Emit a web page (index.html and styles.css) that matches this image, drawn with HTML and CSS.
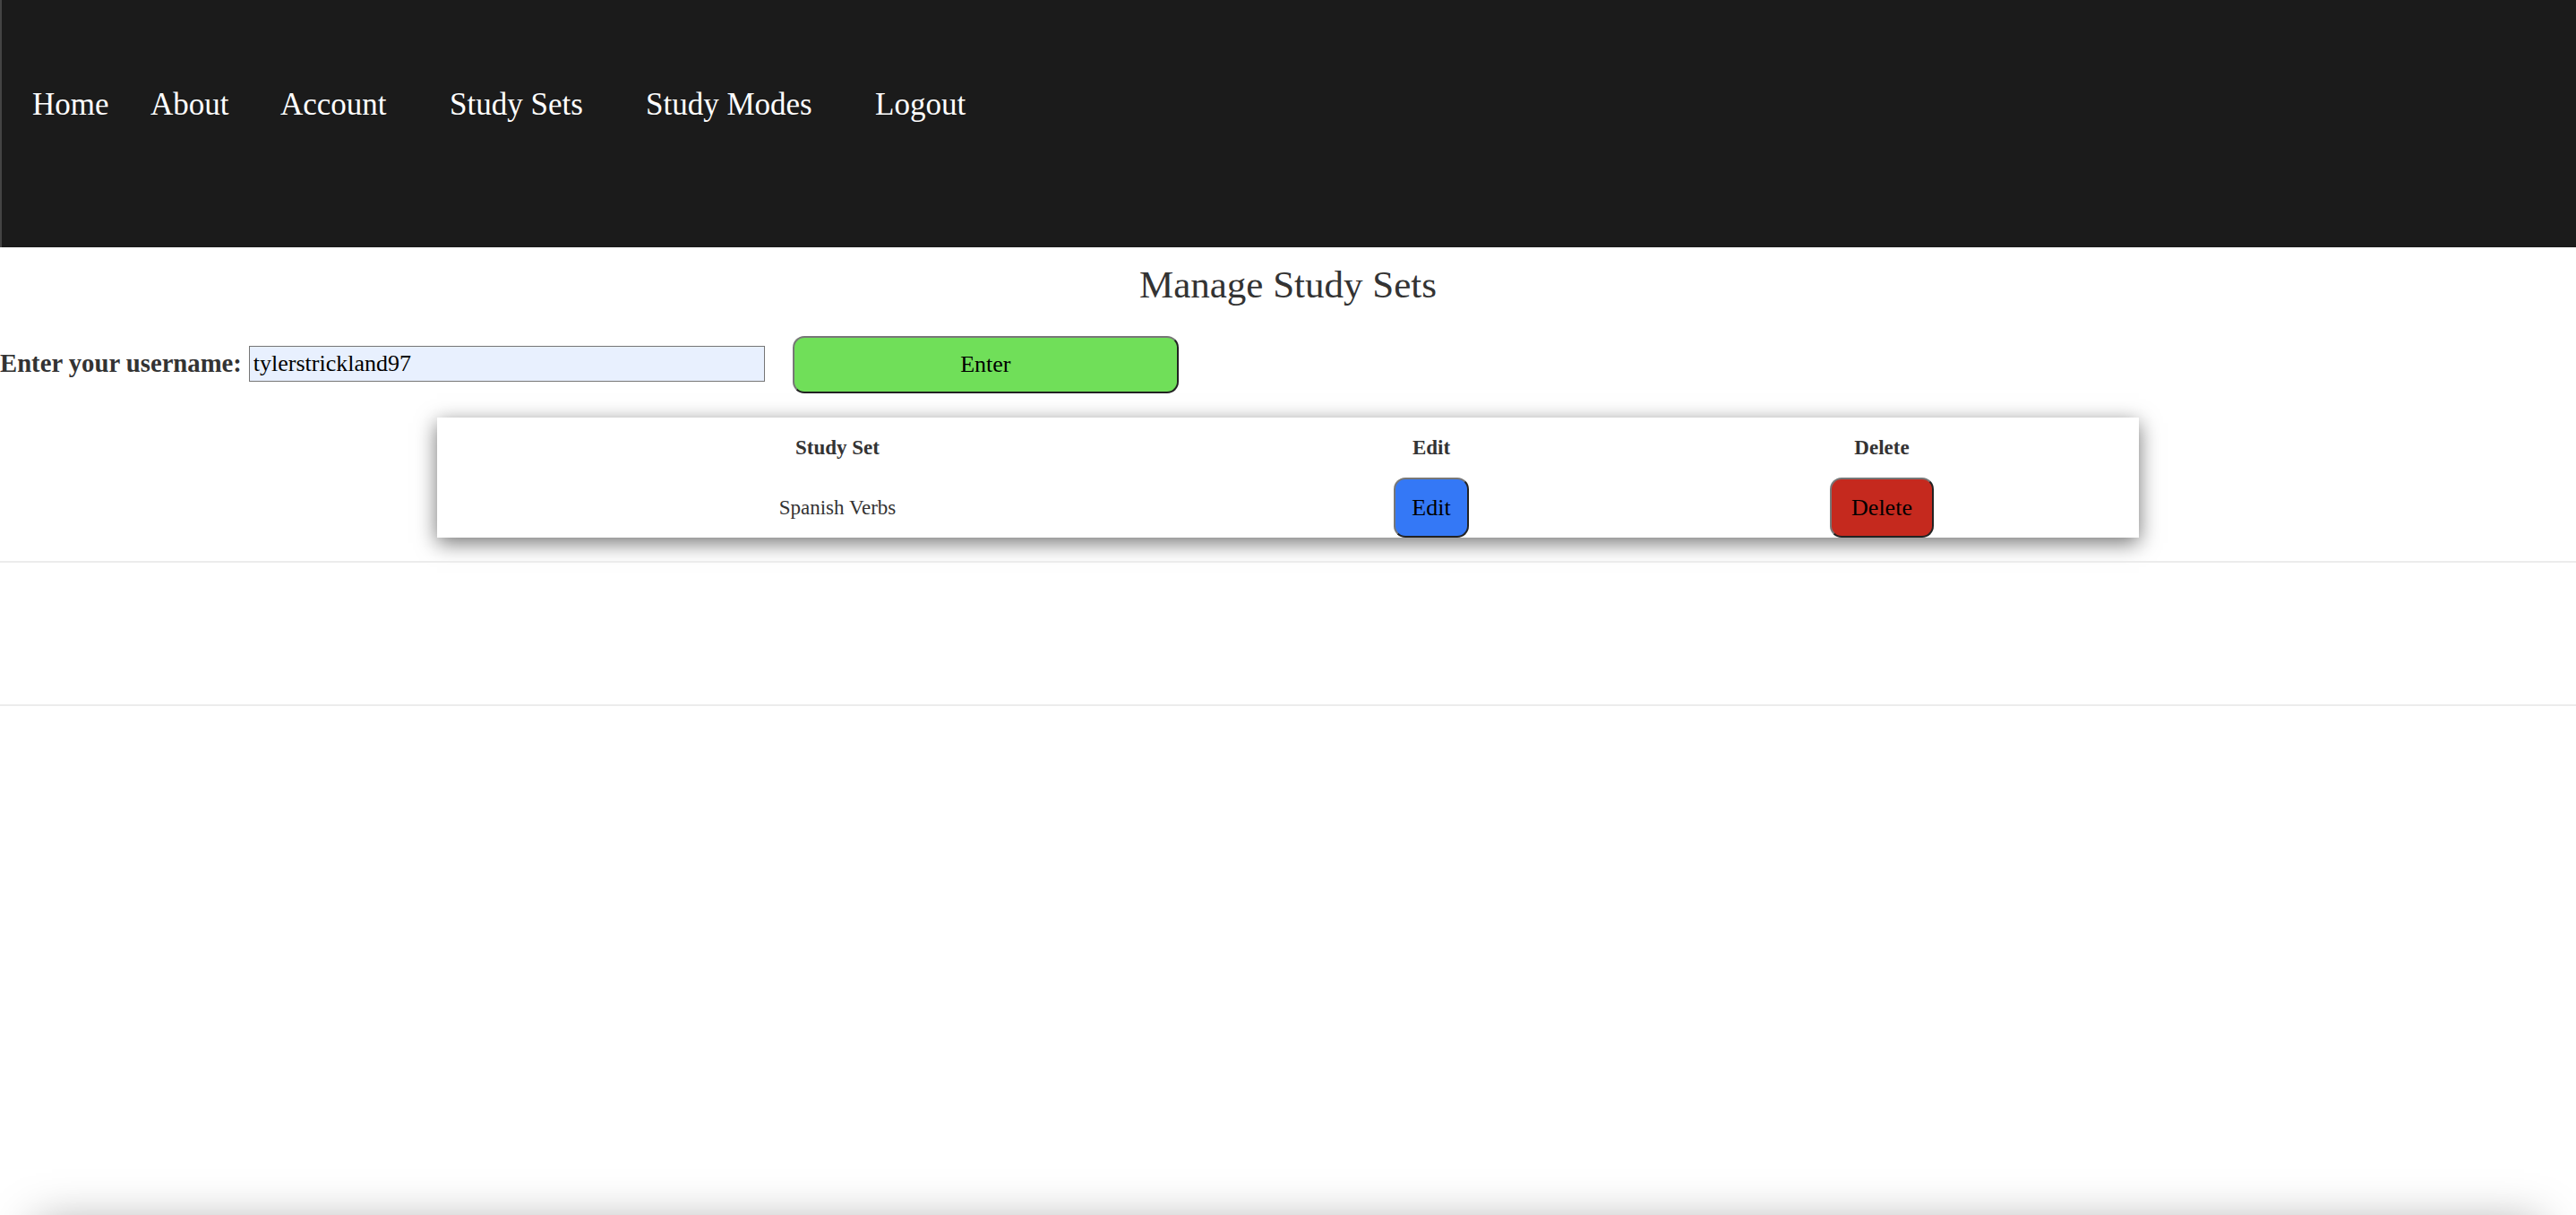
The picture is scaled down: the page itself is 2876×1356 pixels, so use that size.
FILE: index.html
```html
<!DOCTYPE html>
<html lang="en">
<head>
<meta charset="utf-8">
<title>Manage Study Sets</title>
<link rel="stylesheet" href="styles.css">
</head>
<body>
<nav class="topnav">
  <a class="navlink" href="#">Home</a>
  <a class="navlink" href="#">About</a>
  <a class="navlink" href="#">Account</a>
  <a class="navlink" href="#">Study Sets</a>
  <a class="navlink" href="#">Study Modes</a>
  <a class="navlink" href="#">Logout</a>
</nav>
<main class="content">
  <h1 class="title">Manage Study Sets</h1>
  <form class="userform">
    <label class="userlabel" for="username">Enter your username:</label>
    <input class="userinput" id="username" type="text" value="tylerstrickland97">
    <button class="btn btn-enter" type="button">Enter</button>
  </form>
  <div class="card">
    <div class="cell head">Study Set</div>
    <div class="cell head">Edit</div>
    <div class="cell head">Delete</div>
    <div class="cell">Spanish Verbs</div>
    <div class="cell"><button class="btn btn-edit" type="button">Edit</button></div>
    <div class="cell"><button class="btn btn-delete" type="button">Delete</button></div>
  </div>
  <div class="divider"></div>
  <section class="lower"></section>
</main>
</body>
</html>
```
FILE: styles.css
```css
html {
  overflow: hidden;
}
body {
  margin: 0;
  background: #ffffff;
  font-family: "Liberation Serif", "Times New Roman", serif;
  color: #333333;
}
.topnav {
  box-sizing: border-box;
  height: 276px;
  background: #1b1b1b;
  border-left: 2px solid #444444;
  padding: 97px 0 0 34px;
  display: grid;
  grid-template-columns: 132px 145px 189px 219px 256px auto;
  align-items: start;
}
.navlink {
  color: #ffffff;
  text-decoration: none;
  font-size: 35px;
  line-height: 40px;
  white-space: nowrap;
}
.content {
  display: flex;
  flex-direction: column;
}
.title {
  margin: 17px 0 0;
  text-align: center;
  font-weight: normal;
  font-size: 43px;
  line-height: 50px;
  color: #333333;
}
.userform {
  margin: 32px 0 0;
  display: flex;
  align-items: center;
  height: 64px;
}
.userlabel {
  font-weight: bold;
  font-size: 28.7px;
  line-height: 32px;
  color: #333333;
  margin-top: -4px;
}
.userinput {
  box-sizing: border-box;
  margin-left: 8px;
  width: 576px;
  height: 40px;
  border: 1px solid #767676;
  background: #e8f0fe;
  padding: 0 4px;
  font-family: "Liberation Serif", "Times New Roman", serif;
  font-size: 26px;
  color: #000000;
  margin-top: -2px;
}
.btn {
  box-sizing: border-box;
  font-family: "Liberation Serif", "Times New Roman", serif;
  font-size: 26px;
  color: #000000;
  border-width: 2px;
  border-style: solid;
  border-color: #777777 #222222 #222222 #777777;
  border-radius: 13px;
  cursor: pointer;
}
.btn-enter {
  margin-left: 31px;
  width: 431px;
  height: 64px;
  background: #70df59;
}
.card {
  align-self: center;
  width: 1900px;
  margin-top: 27px;
  background: #ffffff;
  box-shadow: 0 6px 22px rgba(0, 0, 0, 0.55);
  display: grid;
  grid-template-columns: 894px 432px 1fr;
  grid-auto-rows: 67px;
}
.cell {
  display: flex;
  align-items: center;
  justify-content: center;
  font-size: 23px;
  color: #333333;
}
.head {
  font-weight: bold;
  font-size: 23px;
}
.btn-edit {
  height: 67px;
  padding: 0 18px;
  background: #3478f6;
}
.btn-delete {
  height: 67px;
  padding: 0 22px;
  background: #c5291e;
}
.divider {
  margin-top: 26px;
  height: 158px;
  border-top: 2px solid #ececec;
  border-bottom: 2px solid #ececec;
}
.lower {
  margin: 578px 40px 0;
  height: 400px;
  background: #ffffff;
  box-shadow: 0 0 50px rgba(0, 0, 0, 0.35);
}
```
